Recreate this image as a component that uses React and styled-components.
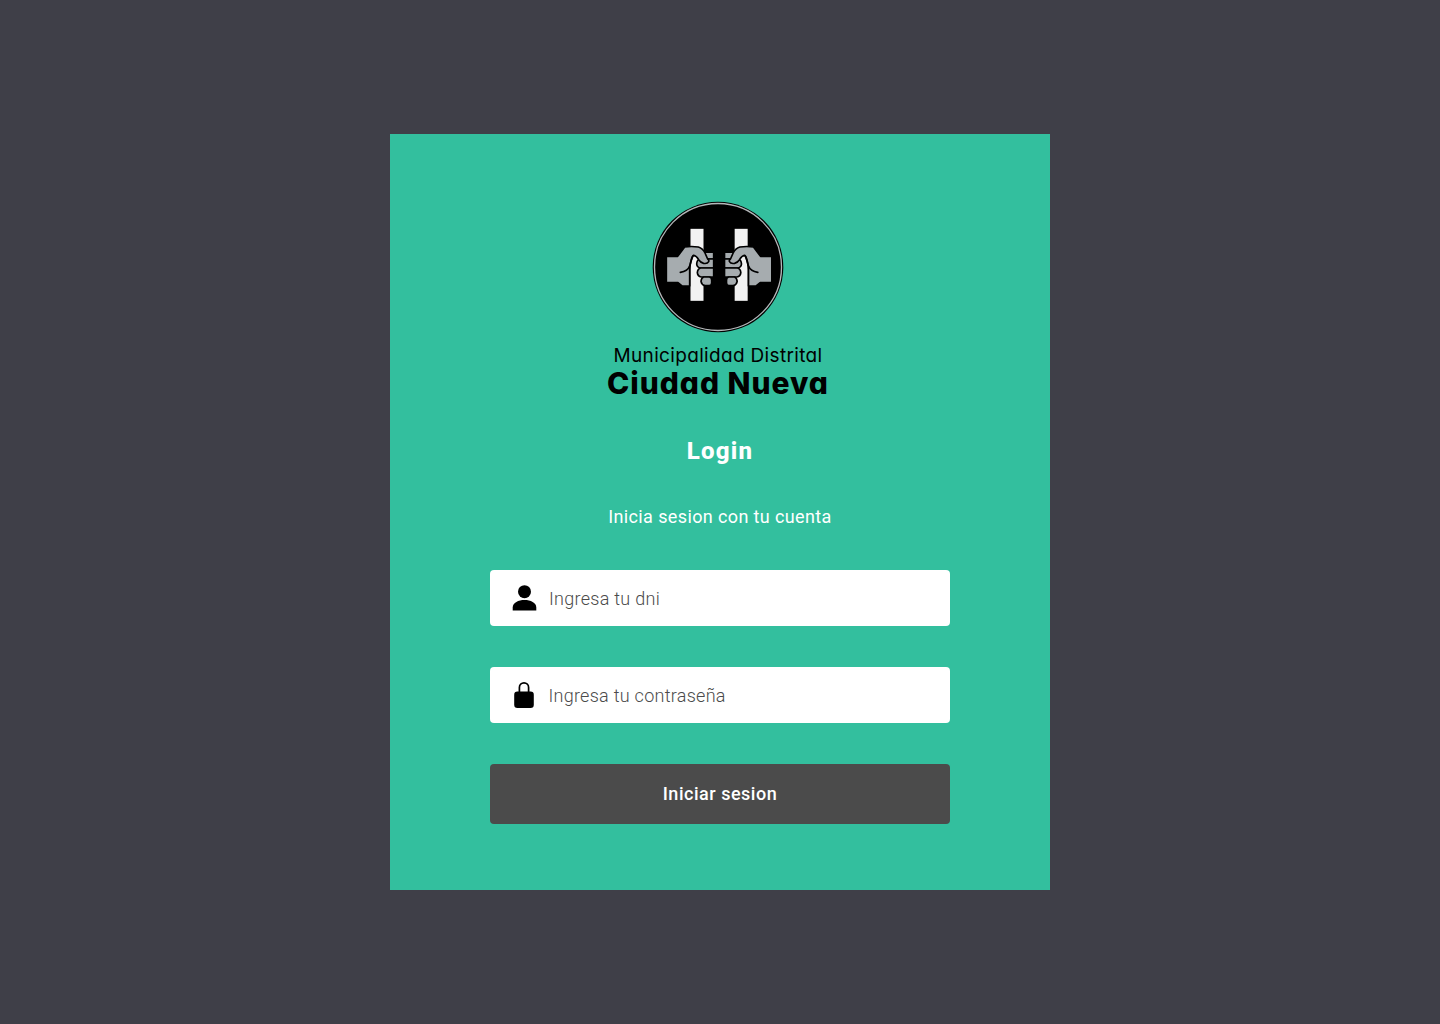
import React from 'react';
import styled, { createGlobalStyle } from 'styled-components';

const GlobalStyle = createGlobalStyle`
  *, *::before, *::after { box-sizing: border-box; }
  body {
    margin: 0;
    background: #3f3f48;
    font-family: Roboto, "Liberation Sans", sans-serif;
  }
`;

const Page = styled.main`
  min-height: 100vh;
  display: flex;
  align-items: center;
  justify-content: center;
`;

const Card = styled.form`
  width: 660px;
  height: 756px;
  padding: 61px 100px 66px;
  display: flex;
  flex-direction: column;
  align-items: center;
  background: #33bf9e;
`;

const Brand = styled.div`
  display: flex;
  flex-direction: column;
  align-items: center;
  margin-right: 4px;
  color: #000;
  font-family: Inter, sans-serif;
  font-feature-settings: "cv11";
  white-space: nowrap;
`;

const Emblem = styled.svg`
  display: block;
  width: 145px;
  height: 145px;
  margin-left: -1px;
`;

const BrandLine = styled.span`
  padding-top: 3px;
  font-size: 19px;
  line-height: 26px;
  letter-spacing: 0.33px;
`;

const BrandName = styled.strong`
  font-size: 30px;
  line-height: 28px;
  font-weight: 800;
  letter-spacing: 0.95px;
`;

const Title = styled.h1`
  margin: 40px 0 0;
  color: #fff;
  font-size: 24px;
  line-height: 28px;
  font-weight: 800;
  letter-spacing: 1.2px;
`;

const Subtitle = styled.p`
  margin: 41px 0 42px;
  color: #fff;
  font-size: 18px;
  line-height: 22px;
  letter-spacing: 0.38px;
`;

const Field = styled.label`
  width: 100%;
  height: 56px;
  margin-bottom: 41px;
  padding: 0 20px;
  display: flex;
  align-items: center;
  gap: ${(p) => p.$gap}px;
  background: #fff;
  border-radius: 4px;
`;

const FieldIcon = styled.svg`
  flex: none;
  width: 30px;
  height: 30px;
`;

const Input = styled.input`
  flex: 1;
  min-width: 0;
  padding: 2px 0 0;
  border: 0;
  outline: 0;
  background: transparent;
  font: 300 18px/22px Roboto, sans-serif;
  letter-spacing: 0.28px;
  &::placeholder { color: #4b4b4b; opacity: 1; }
`;

const Submit = styled.button`
  width: 100%;
  height: 60px;
  padding: 0;
  border: 0;
  border-radius: 4px;
  background: #4b4b4b;
  color: #fff;
  font: 500 18px/22px Roboto, sans-serif;
  letter-spacing: 0.52px;
`;

function Hand() {
  return (
    <g>
      <rect x="136.500" y="101.500" width="39" height="216" fill="#f2f2f2" />
      <g fill="#a6acaf" stroke="#000" strokeWidth="5" strokeLinejoin="round">
        <path d="M176 171.500H206V192H176Z" />
        <path d="M165 192H206V219H167Q156 218 155 207Q156 194 165 192Z" />
        <path d="M167 219H206V246H169Q158 244 157 233Q158 221 167 219Z" />
        <path d="M176 246H193Q200 247 200 255V264Q199 272 192 272H180Q170 270 168 259Q169 248 176 246Z" />
        <path d="M64 184H98L119 156Q139 153 160 156Q173 160 180 174L188 192Q193 195 191 200Q187 207 176 205Q167 203 161 194Q154 182 146 181Q141 184 138 198Q134 211 134 224V273H111L99 263H64Z" />
      </g>
      <path d="M143 184Q137 199 135 211Q128 230 106 232" fill="none" stroke="#000" strokeWidth="5" strokeLinecap="round" />
    </g>
  );
}

function Logo() {
  return (
    <Emblem viewBox="0 0 435 435" aria-hidden="true">
      <circle cx="219" cy="216" r="196" fill="#000" />
      <circle cx="219" cy="216" r="190.500" fill="none" stroke="#b4b8ba" strokeWidth="4" />
      <Hand />
      <g transform="matrix(-1 0 0 1 444.500 0)">
        <Hand />
      </g>
    </Emblem>
  );
}

function UserIcon() {
  return (
    <FieldIcon viewBox="0 0 30 30" aria-hidden="true">
      <circle cx="14.500" cy="8.700" r="6.500" />
      <path d="M2.700 27.500V24.500C2.700 19.500 8.500 17 14.500 17S26.300 19.500 26.300 24.500V27.500Z" />
    </FieldIcon>
  );
}

function LockIcon() {
  return (
    <FieldIcon viewBox="0 0 30 30" aria-hidden="true">
      <rect x="4.200" y="11.500" width="19.600" height="16.500" rx="3.200" />
      <path d="M9.400 12V7.400a4.600 4.600 0 0 1 9.200 0V12" fill="none" stroke="#000" strokeWidth="1.700" />
    </FieldIcon>
  );
}

export default function App() {
  return (
    <Page>
      <GlobalStyle />
      <Card onSubmit={(e) => e.preventDefault()}>
        <Brand>
          <Logo />
          <BrandLine>Municipalidad Distrital</BrandLine>
          <BrandName>Ciudad Nueva</BrandName>
        </Brand>
        <Title>Login</Title>
        <Subtitle>Inicia sesion con tu cuenta</Subtitle>
        <Field $gap={9}>
          <UserIcon />
          <Input type="text" placeholder="Ingresa tu dni" />
        </Field>
        <Field $gap={8.4}>
          <LockIcon />
          <Input type="password" placeholder="Ingresa tu contraseña" />
        </Field>
        <Submit type="submit">Iniciar sesion</Submit>
      </Card>
    </Page>
  );
}
